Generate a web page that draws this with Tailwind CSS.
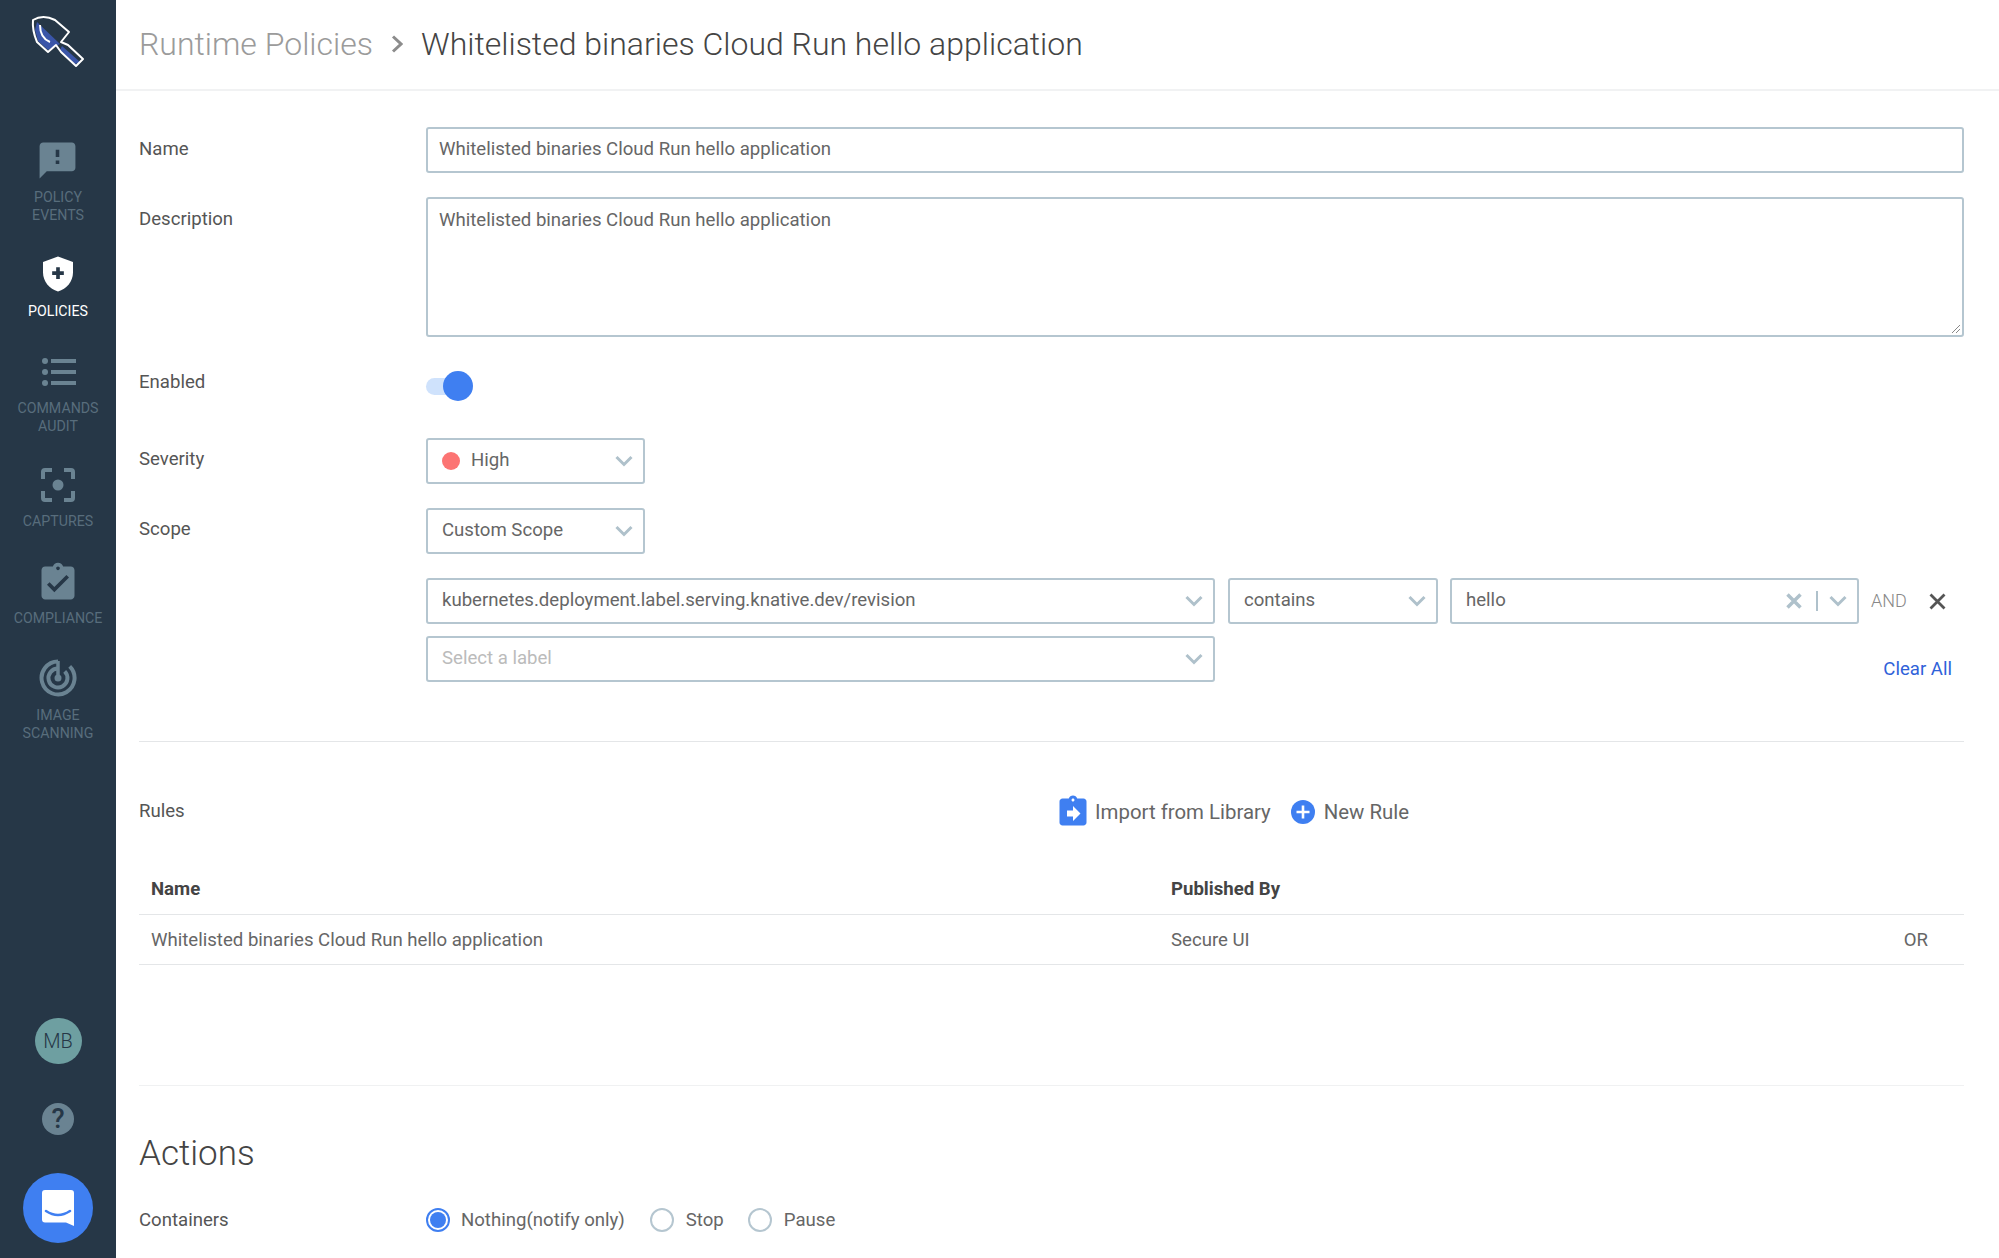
<!doctype html>
<html>
  <head>
    <meta charset="UTF-8" />
    <title>Runtime Policies</title>
    <script src="https://cdn.jsdelivr.net/npm/@tailwindcss/browser@4"></script>
  </head>

  <body class="bg-white font-['Roboto',sans-serif] text-[18.6px] text-[#666]">
    <div class="flex h-[1258px] w-[1999px] overflow-hidden">
      <!-- Sidebar -->
      <aside class="flex w-[116px] shrink-0 flex-col items-center bg-[#263747] text-center text-[14.2px] leading-[18px] text-[#586d7c]">
        <svg class="h-[70px] w-[116px]" viewBox="0 0 116 70">
          <path d="M37 22 L60 44 L48 50 L38 41 L35 30 Z" fill="#3a55a8" />
          <path d="M62 46 L80 62 L75 64 L60 50 Z" fill="#3a55a8" />
          <path d="M33 20 Q43 14 55 20 L69 32 L61 42 L68 45 L83 59 L76 66 L61 52 L56 45 L48 52 L37 42 Q32 30 33 20 Z" fill="none" stroke="#fff" stroke-width="2" stroke-linejoin="round" />
          <path d="M40 25 Q40 38 50 42" fill="none" stroke="#fff" stroke-width="2" />
        </svg>

        <a class="mt-[69px] flex flex-col items-center">
          <svg class="h-[43px] w-[43px]" viewBox="0 0 24 24" fill="#6a8392"><path d="M20 2H4c-1.1 0-1.99.9-1.99 2L2 22l4-4h14c1.1 0 2-.9 2-2V4c0-1.1-.9-2-2-2zm-7 12h-2v-2h2v2zm0-4h-2V6h2v4z" /></svg>
          <span class="mt-[6px]">POLICY<br />EVENTS</span>
        </a>

        <a class="mt-[30px] flex flex-col items-center text-white">
          <svg class="h-[40px] w-[40px]" viewBox="0 0 24 24">
            <path d="M12 1.5L3 4.8v6.2c0 5.55 3.84 10.2 9 11.500 5.160-1.300 9-5.950 9-11.500V4.800z" fill="#fff" />
            <path d="M12 8v7M8.500 11.500h7" stroke="#263747" stroke-width="2.200" />
          </svg>
          <span class="mt-[8px]">POLICIES</span>
        </a>

        <a class="mt-[36px] flex flex-col items-center">
          <svg class="h-[34px] w-[36px]" viewBox="0 0 36 34" fill="#6a8392">
            <circle cx="5" cy="5" r="3" /><circle cx="5" cy="16" r="3" /><circle cx="5" cy="27" r="3" />
            <rect x="11" y="3" width="25" height="4" /><rect x="11" y="14" width="25" height="4" /><rect x="11" y="25" width="25" height="4" />
          </svg>
          <span class="mt-[9px]">COMMANDS<br />AUDIT</span>
        </a>

        <a class="mt-[32px] flex flex-col items-center">
          <svg class="h-[36px] w-[36px]" viewBox="0 0 36 36" fill="none" stroke="#6a8392" stroke-width="4">
            <path d="M12 3H5a2 2 0 0 0-2 2v7M24 3h7a2 2 0 0 1 2 2v7M3 24v7a2 2 0 0 0 2 2h7M33 24v7a2 2 0 0 1-2 2h-7" />
            <circle cx="18" cy="18" r="5.500" fill="#6a8392" stroke="none" />
          </svg>
          <span class="mt-[9px]">CAPTURES</span>
        </a>

        <a class="mt-[31px] flex flex-col items-center">
          <svg class="h-[44px] w-[44px]" viewBox="0 0 24 24" fill="#6a8392"><path d="M19 3h-4.18C14.4 1.84 13.3 1 12 1c-1.3 0-2.4.84-2.82 2H5c-1.1 0-2 .9-2 2v14c0 1.1.9 2 2 2h14c1.1 0 2-.9 2-2V5c0-1.1-.9-2-2-2zm-7 0c.55 0 1 .45 1 1s-.45 1-1 1-1-.45-1-1 .45-1 1-1zm-2 14l-4-4 1.41-1.41L10 14.17l6.59-6.59L18 9l-8 8z" /></svg>
          <span class="mt-[4px]">COMPLIANCE</span>
        </a>

        <a class="mt-[32px] flex flex-col items-center">
          <svg class="h-[38px] w-[38px]" viewBox="0 0 38 38" fill="none" stroke="#6a8392" stroke-width="4">
            <path d="M19 2.500A16.500 16.500 0 1 0 30.700 7.300" />
            <path d="M19 9.500A9.500 9.500 0 1 0 25.700 12.300" />
            <path d="M19 2V19" stroke-width="3.500" />
            <circle cx="19" cy="19" r="3.500" fill="#6a8392" stroke="none" />
          </svg>
          <span class="mt-[9px]">IMAGE<br />SCANNING</span>
        </a>

        <div class="mt-auto flex h-[46px] w-[47px] items-center justify-center rounded-full bg-[#6e9fa1] text-[20px] font-light text-[#263747]">MB</div>
        <div class="mt-[39px] flex h-[32px] w-[32px] items-center justify-center rounded-full bg-[#6a8392] text-[27px] font-medium text-[#263747]">?</div>
        <div class="mt-[38px] mb-[15px] flex h-[70px] w-[70px] items-center justify-center rounded-full bg-[#3f7ff1]">
          <svg class="h-[36px] w-[32px]" viewBox="0 0 32 36">
            <path d="M3 0h26a3 3 0 0 1 3 3v33l-8-3.500H3a3 3 0 0 1-3-3V3a3 3 0 0 1 3-3z" fill="#fff" />
            <path d="M4 21 Q16 29 28 21" fill="none" stroke="#3f7ff1" stroke-width="2.600" stroke-linecap="round" />
          </svg>
        </div>
      </aside>

      <!-- Main -->
      <main class="min-w-0 flex-1">
        <header class="flex h-[91px] items-center border-b-2 border-[#f1f2f3] pl-[23px] pb-[1px] text-[32px] font-light leading-none">
          <span class="text-[#9b9b9b]">Runtime Policies</span>
          <svg class="mx-[18px] h-[18px] w-[12px]" viewBox="0 0 12 18" fill="none" stroke="#8c8c8c" stroke-width="3"><path d="M2 1.500l8 7.500-8 7.500" /></svg>
          <span class="text-[#444]">Whitelisted binaries Cloud Run hello application</span>
        </header>

        <div class="pl-[23px] pr-[35px]">
          <div class="mt-[36px] flex items-center">
            <label class="w-[287px] shrink-0 pb-[1px] text-[#555]">Name</label>
            <div class="flex h-[46px] flex-1 items-center rounded-[3px] border-2 border-[#b5c6d0] px-[11px]">Whitelisted binaries Cloud Run hello application</div>
          </div>

          <div class="mt-[24px] flex items-start">
            <label class="w-[287px] shrink-0 pt-[9px] text-[#555]">Description</label>
            <div class="relative h-[140px] flex-1 rounded-[3px] border-2 border-[#b5c6d0] px-[11px] pt-[8px]">
              Whitelisted binaries Cloud Run hello application
              <svg class="absolute right-[1px] bottom-[1px] h-[10px] w-[10px]" viewBox="0 0 10 10" stroke="#888" fill="none"><path d="M1 9l8-8M5 9l4-4" /></svg>
            </div>
          </div>

          <div class="mt-[33px] flex h-[32px] items-center">
            <label class="w-[287px] shrink-0 pb-[6px] text-[#555]">Enabled</label>
            <div class="relative h-[17px] w-[34px] rounded-full bg-[#cfe2fc]">
              <span class="absolute top-[-7px] left-[17px] h-[30px] w-[30px] rounded-full bg-[#3f7ff1]"></span>
            </div>
          </div>

          <div class="mt-[36px] flex items-center">
            <label class="w-[287px] shrink-0 pb-[3px] text-[#555]">Severity</label>
            <div class="flex h-[46px] w-[219px] items-center rounded-[3px] border-2 border-[#b5c6d0] pl-[14px] pr-[10px] pb-[1px]">
              <span class="mr-[11px] h-[18px] w-[18px] rounded-full bg-[#fc7473]"></span>
              <span class="flex-1">High</span>
              <svg class="h-[12px] w-[18px]" viewBox="0 0 18 12" fill="none" stroke="#afc1cb" stroke-width="3"><path d="M1.500 2l7.500 7.500L16.500 2" /></svg>
            </div>
          </div>

          <div class="mt-[24px] flex items-center">
            <label class="w-[287px] shrink-0 pb-[2px] text-[#555]">Scope</label>
            <div class="flex h-[46px] w-[219px] items-center rounded-[3px] border-2 border-[#b5c6d0] pl-[14px] pr-[10px] pb-[1px]">
              <span class="flex-1">Custom Scope</span>
              <svg class="h-[12px] w-[18px]" viewBox="0 0 18 12" fill="none" stroke="#afc1cb" stroke-width="3"><path d="M1.500 2l7.500 7.500L16.500 2" /></svg>
            </div>
          </div>

          <!-- Scope expression rows -->
          <div class="mt-[24px] ml-[287px] flex items-center">
            <div class="flex h-[46px] w-[789px] items-center rounded-[3px] border-2 border-[#b5c6d0] pl-[14px] pr-[10px] pb-[1px]">
              <span class="flex-1">kubernetes.deployment.label.serving.knative.dev/revision</span>
              <svg class="h-[12px] w-[18px]" viewBox="0 0 18 12" fill="none" stroke="#afc1cb" stroke-width="3"><path d="M1.500 2l7.500 7.500L16.500 2" /></svg>
            </div>
            <div class="ml-[13px] flex h-[46px] w-[210px] items-center rounded-[3px] border-2 border-[#b5c6d0] pl-[14px] pr-[10px] pb-[1px]">
              <span class="flex-1">contains</span>
              <svg class="h-[12px] w-[18px]" viewBox="0 0 18 12" fill="none" stroke="#afc1cb" stroke-width="3"><path d="M1.500 2l7.500 7.500L16.500 2" /></svg>
            </div>
            <div class="ml-[12px] flex h-[46px] w-[409px] items-center rounded-[3px] border-2 border-[#b5c6d0] pl-[14px] pr-[10px] pb-[1px]">
              <span class="flex-1">hello</span>
              <svg class="h-[16px] w-[16px]" viewBox="0 0 16 16" fill="none" stroke="#afc1cb" stroke-width="3.500"><path d="M1.500 1.500l13 13M14.500 1.500l-13 13" /></svg>
              <span class="ml-[14px] mr-[11px] h-[20px] w-[2px] bg-[#afc1cb]"></span>
              <svg class="h-[12px] w-[18px]" viewBox="0 0 18 12" fill="none" stroke="#afc1cb" stroke-width="3"><path d="M1.500 2l7.500 7.500L16.500 2" /></svg>
            </div>
            <span class="ml-[12px] pb-[2px] text-[18px] font-light text-[#888]">AND</span>
            <svg class="ml-[22px] h-[17px] w-[17px]" viewBox="0 0 17 17" fill="none" stroke="#555" stroke-width="2.800"><path d="M1.500 1.500l14 14M15.500 1.500l-14 14" /></svg>
          </div>

          <div class="mt-[12px] ml-[287px] flex items-end justify-between pr-[12px]">
            <div class="flex h-[46px] w-[789px] items-center rounded-[3px] border-2 border-[#b5c6d0] pl-[14px] pr-[10px] pb-[1px] text-[#bbb]">
              <span class="flex-1">Select a label</span>
              <svg class="h-[12px] w-[18px]" viewBox="0 0 18 12" fill="none" stroke="#afc1cb" stroke-width="3"><path d="M1.500 2l7.500 7.500L16.500 2" /></svg>
            </div>
            <a class="mb-[-2px] text-[#2f62d9]">Clear All</a>
          </div>

          <div class="mt-[59px] border-t border-[#e4e6e8]"></div>

          <div class="mt-[52px] flex items-center">
            <label class="w-[916px] shrink-0 text-[#555]">Rules</label>
            <svg class="-scale-x-100 h-[36px] w-[36px] shrink-0" viewBox="0 0 24 24" fill="#3f7ff1"><path d="M19 3h-4.180C14.400 1.840 13.300 1 12 1c-1.300 0-2.400.840-2.820 2H5c-1.100 0-2 .900-2 2v14c0 1.100.900 2 2 2h14c1.100 0 2-.900 2-2V5c0-1.100-.900-2-2-2zm-7 0c.550 0 1 .450 1 1s-.450 1-1 1-1-.450-1-1 .450-1 1-1zm4 12h-4v3l-5-5 5-5v3h4v4z" /></svg>
            <span class="ml-[4px] text-[20.4px]">Import from Library</span>
            <span class="ml-[20px] h-[24px] w-[24px] rounded-full bg-[#3f7ff1]">
              <svg class="h-[24px] w-[24px]" viewBox="0 0 24 24" stroke="#fff" stroke-width="2.600"><path d="M12 5.500v13M5.500 12h13" /></svg>
            </span>
            <span class="ml-[9px] text-[20.4px]">New Rule</span>
          </div>

          <table class="mt-[44px] w-full text-left">
            <thead>
              <tr class="h-[40px] border-b border-[#e4e6e8] font-bold text-[#444]">
                <th class="w-[1032px] pl-[12px] pb-[7px]">Name</th>
                <th class="pb-[7px]">Published By</th>
                <th class="w-[100px]"></th>
              </tr>
            </thead>
            <tbody>
              <tr class="h-[50px] border-b border-[#e4e6e8]">
                <td class="pl-[12px] pt-[3px]">Whitelisted binaries Cloud Run hello application</td>
                <td class="pt-[3px]">Secure UI</td>
                <td class="pt-[3px] pr-[36px] text-right">OR</td>
              </tr>
            </tbody>
          </table>

          <div class="mt-[120px] border-t border-[#f0f1f2]"></div>

          <h2 class="mt-[49px] text-[35px] font-light leading-[38px] text-[#444]">Actions</h2>

          <div class="mt-[34px] flex items-center">
            <label class="w-[287px] shrink-0 text-[#555]">Containers</label>
            <span class="flex h-[24px] w-[24px] items-center justify-center rounded-full border-2 border-[#3f7ff1]"><span class="h-[16px] w-[16px] rounded-full bg-[#3f7ff1]"></span></span>
            <span class="ml-[11px]">Nothing(notify only)</span>
            <span class="ml-[25px] h-[24px] w-[24px] rounded-full border-2 border-[#b5c6d0]"></span>
            <span class="ml-[12px]">Stop</span>
            <span class="ml-[24px] h-[24px] w-[24px] rounded-full border-2 border-[#b5c6d0]"></span>
            <span class="ml-[12px]">Pause</span>
          </div>
        </div>
      </main>
    </div>
  </body>
</html>
